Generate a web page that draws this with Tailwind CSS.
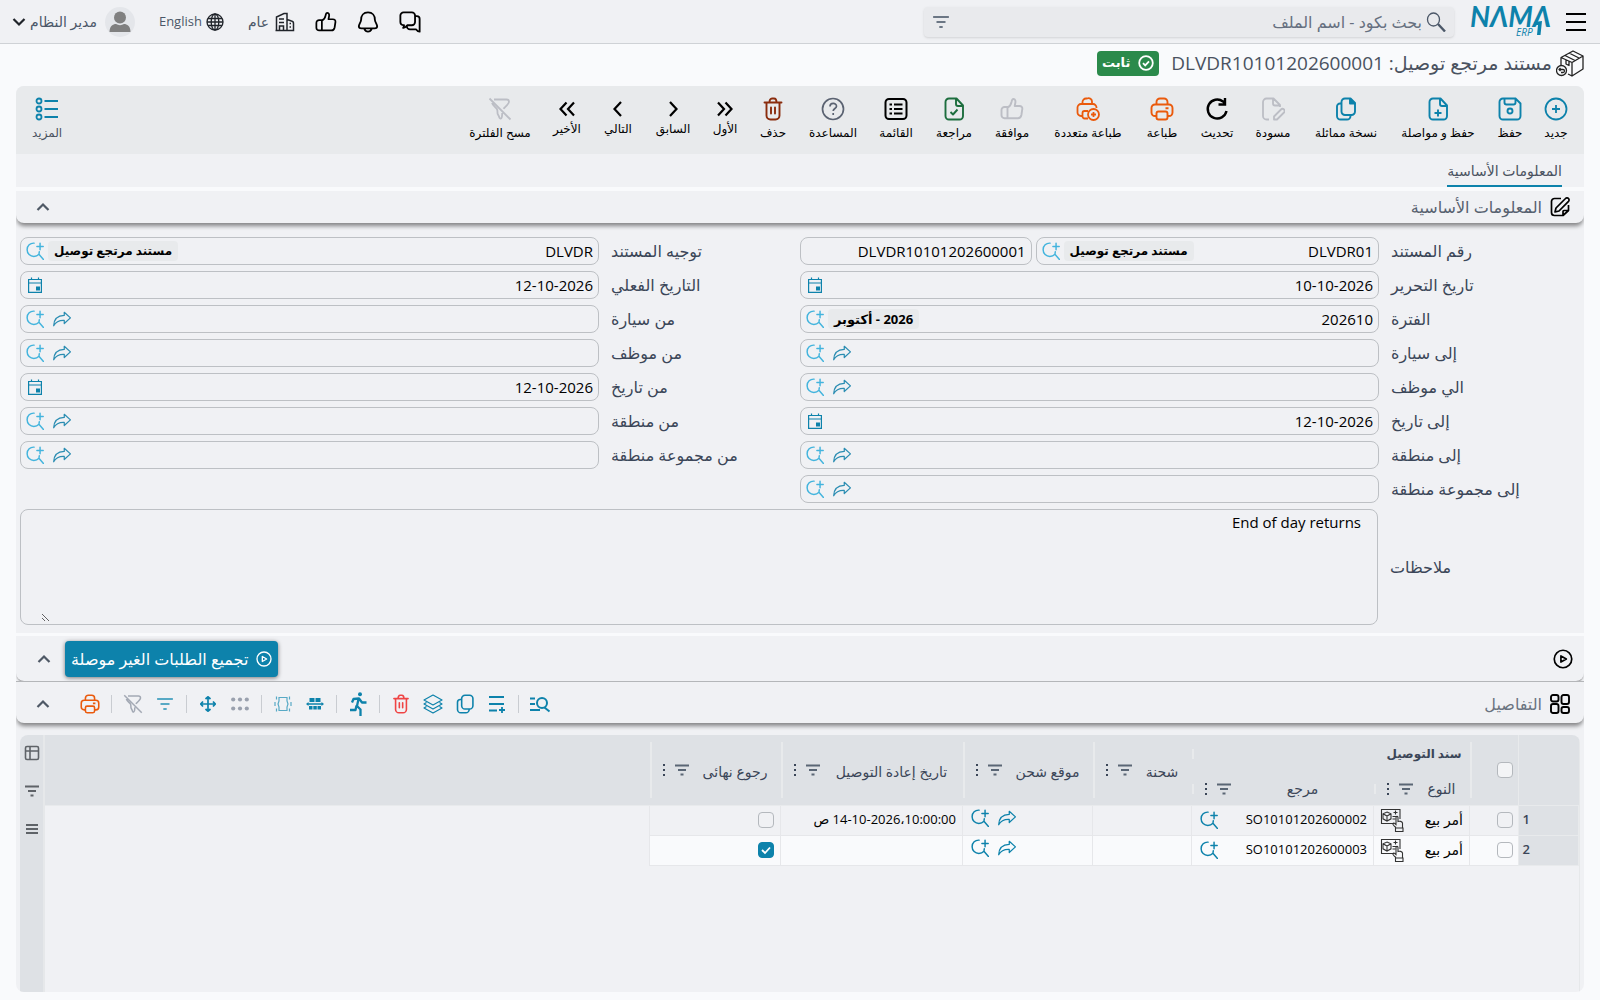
<!DOCTYPE html>
<html lang="ar" dir="rtl">
  <head>
    <meta charset="UTF-8" />
    <meta name="viewport" content="width=device-width, initial-scale=1.0" />
    <title>مستند مرتجع توصيل - NAMA ERP</title>
    <script src="https://cdn.jsdelivr.net/npm/@tailwindcss/browser@4"></script>
  </head>

  <body
    class="min-h-screen flex flex-col bg-[#f9fafc] text-black font-['Open_Sans','DejaVu_Sans',sans-serif]"
  >
    <!-- Icons -->
    <svg class="hidden" aria-hidden="true">
      <symbol id="i-lookup" viewBox="0 0 16 16" fill="none" stroke="currentColor" stroke-width="1.3" stroke-linecap="round">
        <path d="M7.200 1C3.700 .8 1 3.300 1 6.800c0 3.500 2.700 6 6 6 1.800 0 3.300-.6 4.500-1.900M11.500 10.900l.3-2.200M11.500 10.900L15.500 15.500" />
        <path d="M12.500 1.200v5.600M9.700 4h5.600" />
      </symbol>
      <symbol id="i-goto" viewBox="0 0 16 16" fill="none" stroke="currentColor" stroke-width="1.100" stroke-linejoin="round">
        <path d="M10 2l5.500 5L10 12V9.200C5.500 9 2.500 10.500.6 14 .8 8.500 4 5 10 4.800z" />
      </symbol>
      <symbol id="i-calendar" viewBox="0 0 16 16" fill="none" stroke="currentColor" stroke-width="1.200">
        <path d="M1.600 2.500h12.800v12.900H1.600zM1.600 6h12.800M4.500 .5v2.500M11.500 .5v2.500" />
        <path fill="currentColor" stroke="none" d="M9 9.500h4v4H9z" />
      </symbol>
      <symbol id="i-filter" viewBox="0 0 16 16" fill="none" stroke="currentColor" stroke-width="1.800">
        <path d="M1 3.500h14M4 8h8M6.500 12.500h3" />
      </symbol>
      <symbol id="i-dots" viewBox="0 0 4 16" fill="currentColor">
        <path d="M1 2h2v2H1zM1 7h2v2H1zM1 12h2v2H1z" />
      </symbol>
      <symbol id="i-chevron" viewBox="0 0 14 10" fill="none" stroke="currentColor" stroke-width="2.200">
        <path d="M1.500 8L7 2.500 12.500 8" />
      </symbol>
      <symbol id="i-printer" viewBox="0 0 24 24" fill="none" stroke="currentColor" stroke-width="1.900" stroke-linejoin="round">
        <path d="M6.500 7.500V5a3.500 3.500 0 013.500-3.500h4A3.500 3.500 0 0117.500 5v2.500M6 19H5a3.500 3.500 0 01-3.500-3.500V11A3.500 3.500 0 015 7.500h14a3.500 3.500 0 013.500 3.500v4.500A3.500 3.500 0 0119 19h-1" />
        <path d="M8.500 14.500h7a2 2 0 012 2v4a2 2 0 01-2 2h-7a2 2 0 01-2-2v-4a2 2 0 012-2zM15.500 11.200h3" />
      </symbol>
      <symbol id="i-copy" viewBox="0 0 24 24" fill="none" stroke="currentColor" stroke-width="1.900" stroke-linejoin="round">
        <path d="M11 1.500h5.500L21 6v8.500a3.500 3.500 0 01-3.500 3.500H11a3.500 3.500 0 01-3.500-3.500V5A3.500 3.500 0 0111 1.500zM7.500 6.500H6A3 3 0 003 9.500V19a3.500 3.500 0 003.500 3.500h6.500a3.500 3.500 0 003.500-3.500v-1" />
        <path fill="currentColor" d="M16 2v4.500h4.500z" />
      </symbol>
      <symbol id="i-copy2" viewBox="0 0 24 24" fill="none" stroke="currentColor" stroke-width="1.900">
        <path d="M12 1.500h5.500a4 4 0 014 4v8.500a4 4 0 01-4 4H12a4 4 0 01-4-4V5.500a4 4 0 014-4zM8 6.500H6.500A3.500 3.500 0 003 10v8.500a4 4 0 004 4h6a4 4 0 004-4V18" />
      </symbol>
      <symbol id="i-trash" viewBox="0 0 24 24" fill="none" stroke="currentColor" stroke-width="1.900" stroke-linecap="round">
        <path d="M3.500 5.500h17M5.500 5.500v13a4 4 0 004 4h5a4 4 0 004-4v-13M8.500 5.500c0-2.500 1-4 2.500-4h2c1.500 0 2.500 1.500 2.500 4M10 10.500v6M14 10.500v6" />
      </symbol>
      <symbol id="i-thumb" viewBox="0 0 24 24" fill="none" stroke="currentColor" stroke-width="1.900" stroke-linejoin="round">
        <path d="M7.500 10.500C10 9.500 11 7.500 11.500 5c.3-1.800.8-3 2-3 1.800 0 2.200 2 1.800 4l-.6 3h4.800c2 0 3 1.300 2.800 3l-.9 6c-.4 2-1.500 3.200-3.500 3.200H7.500M4.500 10h3v11.200h-3a3 3 0 01-3-3V13a3 3 0 013-3z" />
      </symbol>
      <symbol id="i-filter-off" viewBox="0 0 24 24" fill="none" stroke="currentColor" stroke-width="1.800" stroke-linejoin="round">
        <path d="M1.500 1.500l21 21M6 2.500h12.500c1.500 0 2.500 1 2.500 2.300 0 2.200-4.500 5.500-5.500 7M4 6c.8 2.300 3.300 4 4.800 5.800.8 1 .7 2.200.7 4.200 0 1.500 1 2 1.500 3.500.4 1.500 1 2.500 2 2 1.300-.6 1-3 1.200-5.500" />
      </symbol>
      <symbol id="i-play" viewBox="0 0 24 24" fill="none" stroke="currentColor" stroke-width="2" stroke-linejoin="round">
        <circle cx="12" cy="12" r="10.500" />
        <path d="M9.500 8.300l6.500 3.700-6.500 3.700z" />
      </symbol>
      <symbol id="i-order" viewBox="0 0 24 24" fill="none" stroke="#333" stroke-width="1.100">
        <path d="M20 8V1.500H1.500v14H14M20 8v3" />
        <path d="M7 4l4 1.800v5L7 13l-4-2.200v-5zM3 5.800L7 8l4-2.200M7 8v5M13.500 4.500h4M15.500 2.500v4M12.500 8.500h5M12.500 11h3" />
        <path d="M16 19.500c-2-1.500-3.500-3.500-3-4.200.7-.8 2 .2 3 1.200V9.500c0-1.500 2-1.500 2 0v4c1.500-.5 4-.3 4.500 1.500v4.500M15.500 20h7.500v3.500h-7.500z" />
      </symbol>
    </svg>

    <!-- Top bar -->
    <header
      class="h-11 shrink-0 flex items-center justify-between px-3 bg-[#f0f1f4] border-b border-[#cfd2d6] text-[#4b5768]"
    >
      <div class="flex items-center gap-4 pr-[2px]">
        <button type="button" aria-label="القائمة الرئيسية" class="text-black">
          <svg class="w-5 h-5" viewBox="0 0 20 20" stroke="currentColor" stroke-width="2">
            <path d="M0 2h20M0 10h20M0 18h20" />
          </svg>
        </button>
        <a href="#" aria-label="NAMA ERP">
          <svg class="w-20 h-10 overflow-visible" viewBox="0 0 80 40" direction="ltr" fill="#0d82ab">
            <text x="0" y="25" class="font-['Lato'] font-bold italic text-[28px]">NΛMΛ</text>
            <text x="46" y="34" class="font-['Open_Sans'] italic text-[10px]">ERP</text>
            <path d="M64 20l8-1-1.500 14h-3.500l1-10h-4z" />
          </svg>
        </a>
        <div class="flex items-center w-[530px] h-[30px] gap-1 pr-2 pl-1 rounded bg-[#e9eaed] shadow-sm">
          <svg class="w-5 h-5" viewBox="0 0 20 20" fill="none" stroke="currentColor">
            <ellipse cx="7.500" cy="7.500" rx="6" ry="6.500" stroke-width="1.300" />
            <path d="M12 12l7 7.500" stroke-width="2.400" />
          </svg>
          <input
            type="text"
            aria-label="بحث"
            placeholder="بحث بكود - اسم الملف"
            class="flex-1 bg-transparent text-base outline-none placeholder:text-[#667080]"
          />
          <button type="button" aria-label="تصفية" class="pl-1 text-[#6b7684]">
            <svg class="w-[18px] h-[18px]"><use href="#i-filter" /></svg>
          </button>
        </div>
      </div>

      <div class="flex items-center text-sm">
        <button type="button" aria-label="المحادثات" class="ml-5 text-black">
          <svg class="w-[22px] h-6" viewBox="0 0 24 24" fill="none" stroke="currentColor" stroke-width="2" stroke-linejoin="round">
            <path d="M5 1.500h9a3.500 3.500 0 013.500 3.500v7a3.500 3.500 0 01-3.500 3.500H9c-1.500 2-3 3-4.500 2.800 .8-.8 1-1.800 1-2.800-2.500 0-4-1-4-3.500V5A3.500 3.500 0 015 1.500z" />
            <path d="M17.500 5.500h2A3 3 0 0122.500 8.500v14c-1.500 0-3-1-4-2.500H12a3.500 3.500 0 01-3.500-3.500v-1" />
          </svg>
        </button>
        <button type="button" aria-label="الإشعارات" class="ml-5 text-black">
          <svg class="w-[22px] h-6" viewBox="0 0 24 24" fill="none" stroke="currentColor" stroke-width="2" stroke-linejoin="round">
            <path d="M12 1.500c-5 0-7.500 3.500-7.500 8-.2 3-2.500 5-2.500 7.200 0 1.500 1 2.300 2.800 2.300h14.400c1.800 0 2.800-.8 2.800-2.300 0-2.200-2.300-4.200-2.500-7.200 0-4.500-2.500-8-7.500-8zM8 19.500c.8 1.800 2 3 4 3s3.200-1.200 4-3" />
          </svg>
        </button>
        <button type="button" aria-label="الموافقات" class="ml-5 text-black">
          <svg class="w-[22px] h-[22px]"><use href="#i-thumb" /></svg>
        </button>
        <button type="button" class="flex items-center gap-[6px] ml-6">
          <svg class="w-5 h-5 text-[#20242a]" viewBox="0 0 20 20" fill="none" stroke="currentColor" stroke-width="1.500">
            <path d="M1.500 18.500V5L9 1.500h3v17M12 7.500l4.500 1.500a2.500 2.500 0 012 2.500v7H.5M4 7h5M4 10.500h5M4.500 18.500v-4.500h4v4.500M14.500 11.500h1.500M14.500 15h1.500" />
          </svg>
          عام
        </button>
        <button type="button" class="flex items-center gap-1 ml-6">
          <svg class="w-[18px] h-[18px] text-[#20242a]" viewBox="0 0 18 18" fill="none" stroke="currentColor" stroke-width="1.300">
            <circle cx="9" cy="9" r="8" />
            <ellipse cx="9" cy="9" rx="3.800" ry="8" />
            <path d="M2 5.500h14M2 12.500h14M1 9h16M9 1v16" />
          </svg>
          <span class="text-[13px]">English</span>
        </button>
        <button type="button" class="flex items-center">
          <svg class="w-[30px] h-[30px] ml-2" viewBox="0 0 30 30">
            <circle cx="15" cy="15" r="15" fill="#e4e6ea" />
            <circle cx="15" cy="10.500" r="6" fill="#808080" />
            <path fill="#808080" d="M4.500 25c0-6 3.500-8 6.500-8 2.500 1.500 5.500 1.500 8 0 3 0 6.500 2 6.500 8z" />
          </svg>
          مدير النظام
          <svg class="w-[14px] h-[10px] mr-1 rotate-180 text-[#20242a]"><use href="#i-chevron" /></svg>
        </button>
      </div>
    </header>

    <main class="flex-1 flex flex-col px-4 pb-2">
      <!-- Title -->
      <div class="flex items-center h-[42px] gap-1 pb-1">
        <svg class="w-7 h-7" viewBox="0 0 28 28" fill="none" stroke="#222" stroke-width="1.300" stroke-linejoin="round">
          <path d="M5 8.500L17 2l10 5-11 6.500zM16 13.500V27l11-7V7M5 8.500V16M12 25l4 2M9 6.500l10 5M13 4l10 5M10 11v4l3 1.500v-4" />
          <circle cx="5.500" cy="21.500" r="5" />
          <path d="M3 20.500h4c2 0 2 3 0 3H5M4.500 19L3 20.500 4.500 22" />
        </svg>
        <h1 class="text-[19px] text-[#4a5260]">مستند مرتجع توصيل: DLVDR10101202600001</h1>
        <span class="flex items-center gap-2 h-[25px] px-[5px] mr-2 rounded bg-[#2b8a4b] text-white text-[13px] font-bold">
          <svg class="w-4 h-4" viewBox="0 0 16 16" fill="none" stroke="currentColor" stroke-width="1.800">
            <circle cx="8" cy="8" r="6.800" />
            <path d="M5 8.200l2.200 2.200L11 6.300" />
          </svg>
          ثابت
        </span>
      </div>

      <div class="flex-1 flex flex-col rounded-lg overflow-hidden bg-[#f0f1f4]">
        <!-- Action toolbar -->
        <div class="flex items-start justify-between h-[68px] pt-[11px] pr-2 pl-4 bg-[#e8eaec] text-xs">
          <div class="flex items-start whitespace-nowrap">
            <button type="button" class="flex flex-col items-center gap-1 w-10">
              <svg class="w-6 h-6 text-[#0d82ab]" viewBox="0 0 24 24" fill="none" stroke="currentColor" stroke-width="1.800">
                <circle cx="12" cy="12" r="10.500" />
                <path d="M12 8v8M8 12h8" />
              </svg>
              جديد
            </button>
            <button type="button" class="flex flex-col items-center gap-1 w-[52px]">
              <svg class="w-6 h-6 text-[#0d82ab]" viewBox="0 0 24 24" fill="none" stroke="currentColor" stroke-width="1.900">
                <path d="M6 1.500h11.500l5 5V19a3.500 3.500 0 01-3.500 3.500H5A3.500 3.500 0 011.500 19V5A3.500 3.500 0 015 1.500zM6.500 2v3.500a2 2 0 002 2h7a2 2 0 002-2V2" />
                <circle cx="12" cy="14" r="2.500" />
              </svg>
              حفظ
            </button>
            <button type="button" class="flex flex-col items-center gap-1 w-[92px]">
              <svg class="w-6 h-6 text-[#0d82ab]" viewBox="0 0 24 24" fill="none" stroke="currentColor" stroke-width="1.900" stroke-linejoin="round">
                <path d="M7 1.500h7.500l6.500 7V19a3.500 3.500 0 01-3.500 3.500H7A3.500 3.500 0 013.500 19V5A3.500 3.500 0 017 1.500zM14 2v5a2 2 0 002 2h5M12 12.500v7M8.500 16h7" />
              </svg>
              حفظ و مواصلة
            </button>
            <button type="button" class="flex flex-col items-center gap-1 w-[92px]">
              <svg class="w-6 h-6 text-[#0d82ab]"><use href="#i-copy" /></svg>
              نسخة مماثلة
            </button>
            <button type="button" class="flex flex-col items-center gap-1 w-[54px]">
              <svg class="w-6 h-6 text-[#bcbec5]" viewBox="0 0 24 24" fill="none" stroke="currentColor" stroke-width="1.800" stroke-linejoin="round">
                <path d="M19 10V8L12.500 1.500H5.500A3.500 3.500 0 002 5v14a3.500 3.500 0 003.500 3.500H8M12 2v4.500a2 2 0 002 2h5M13 22.500v-3l7-7a2 2 0 013 3l-7 7z" />
              </svg>
              مسودة
            </button>
            <button type="button" class="flex flex-col items-center gap-1 w-[58px]">
              <svg class="w-6 h-6" viewBox="0 0 24 24" fill="none" stroke="currentColor" stroke-width="2.400">
                <path d="M21.500 14a9.500 9.500 0 11-3.500-9.500l1.500 1.500M20 1v6.500h-6.500" />
              </svg>
              تحديث
            </button>
            <button type="button" class="flex flex-col items-center gap-1 w-[52px]">
              <svg class="w-6 h-6 text-[#ea5a0c]"><use href="#i-printer" /></svg>
              طباعة
            </button>
            <button type="button" class="flex flex-col items-center gap-1 w-24">
              <svg class="w-6 h-6 text-[#ea5a0c]" viewBox="0 0 24 24" fill="none" stroke="currentColor" stroke-width="1.800" stroke-linejoin="round">
                <path d="M6.500 7V5A3.500 3.500 0 0110 1.500h1A3.500 3.500 0 0116 5v2M6 19H5a3.500 3.500 0 01-3.500-3.500V10.500A3.500 3.500 0 015 7h12a3.500 3.500 0 013.500 3.500V11M12 21.500H8.500a2 2 0 01-2-2V16a2 2 0 012-2H12" />
                <circle cx="17.500" cy="17.500" r="5.500" />
                <path d="M17.500 15v5M15 17.500h5" />
              </svg>
              طباعة متعددة
            </button>
            <button type="button" class="flex flex-col items-center gap-1 w-14">
              <svg class="w-6 h-6 text-[#bcbec5]"><use href="#i-thumb" /></svg>
              موافقة
            </button>
            <button type="button" class="flex flex-col items-center gap-1 w-[60px]">
              <svg class="w-6 h-6 text-[#1d6e3e]" viewBox="0 0 24 24" fill="none" stroke="currentColor" stroke-width="1.900" stroke-linejoin="round">
                <path d="M7 1.500h7.500l6.500 7V19a3.500 3.500 0 01-3.500 3.500H7A3.500 3.500 0 013.500 19V5A3.500 3.500 0 017 1.500zM14 2v5a2 2 0 002 2h5M8.500 15l2.500 2.500 4.500-5" />
              </svg>
              مراجعة
            </button>
            <button type="button" class="flex flex-col items-center gap-1 w-14">
              <svg class="w-6 h-6" viewBox="0 0 24 24" fill="none" stroke="currentColor" stroke-width="2">
                <rect x="1.500" y="2" width="21" height="20" rx="3.500" />
                <path d="M5.500 7.500h2.500M5.500 12h2.500M5.500 16.500h2.500M10 7.500h8.500M10 12h8.500M10 16.500h8.500" />
              </svg>
              القائمة
            </button>
            <button type="button" class="flex flex-col items-center gap-1 w-[70px]">
              <svg class="w-6 h-6 text-[#5b6372]" viewBox="0 0 24 24" fill="none" stroke="currentColor" stroke-width="1.700">
                <circle cx="12" cy="12" r="10.500" />
                <path d="M9 9.500c0-4 6.500-4 6.500-.3 0 2.300-3.300 2.300-3.300 4.800M12.200 16v2" />
              </svg>
              المساعدة
            </button>
            <button type="button" class="flex flex-col items-center gap-1 w-[50px]">
              <svg class="w-6 h-6 text-[#8a2c0d]"><use href="#i-trash" /></svg>
              حذف
            </button>
            <button type="button" class="flex flex-col items-center w-[46px]">
              <svg class="w-5 h-6" viewBox="0 0 20 24" fill="none" stroke="currentColor" stroke-width="2.200">
                <path d="M3 5.500l6 6.500-6 6.500M10.500 5.500l6 6.500-6 6.500" />
              </svg>
              الأول
            </button>
            <button type="button" class="flex flex-col items-center w-[58px]">
              <svg class="w-5 h-6" viewBox="0 0 20 24" fill="none" stroke="currentColor" stroke-width="2.200">
                <path d="M7 5l6.500 7L7 19" />
              </svg>
              السابق
            </button>
            <button type="button" class="flex flex-col items-center w-[52px]">
              <svg class="w-5 h-6" viewBox="0 0 20 24" fill="none" stroke="currentColor" stroke-width="2.200">
                <path d="M13 5l-6.500 7L13 19" />
              </svg>
              التالي
            </button>
            <button type="button" class="flex flex-col items-center w-[50px]">
              <svg class="w-5 h-6" viewBox="0 0 20 24" fill="none" stroke="currentColor" stroke-width="2.200">
                <path d="M9.500 5.500l-6 6.500 6 6.500M17 5.500l-6 6.500 6 6.500" />
              </svg>
              الأخير
            </button>
            <button type="button" class="flex flex-col items-center gap-1 w-[84px]">
              <svg class="w-6 h-6 text-[#bcbec5]"><use href="#i-filter-off" /></svg>
              مسح الفلترة
            </button>
          </div>
          <button type="button" class="flex flex-col items-center gap-1 text-[#4a5260]">
            <svg class="w-6 h-6 text-[#0d82ab]" viewBox="0 0 24 24" fill="none" stroke="currentColor" stroke-width="1.800">
              <circle cx="4" cy="4" r="2.500" />
              <circle cx="4" cy="12" r="2.500" />
              <circle cx="4" cy="20" r="2.500" />
              <path d="M9.500 4H23M9.500 12H23M9.500 20H23" />
            </svg>
            المزيد
          </button>
        </div>

        <!-- Tabs -->
        <nav class="flex h-[33px] px-[22px]">
          <a href="#basic" class="flex items-center pt-[2px] border-b-2 border-[#0d82ab] text-sm text-[#4a5260]">المعلومات الأساسية</a>
        </nav>

        <!-- Basic information -->
        <div
          class="relative flex items-center justify-between h-9 pr-[14px] pl-5 border-t-4 border-[#f9fafc] rounded-b-lg bg-[#f0f1f4] shadow-[0_4px_4px_-1px_rgba(0,0,0,0.45)]"
        >
          <h2 class="flex items-center gap-2 text-base text-[#56606f]">
            <svg class="w-5 h-5 text-black" viewBox="0 0 20 20" fill="none" stroke="currentColor" stroke-width="1.700" stroke-linejoin="round">
              <path d="M11 1.500H4.500a3 3 0 00-3 3v11a3 3 0 003 3H13l5.500-5V8M5 15l1-4 9.500-9.500a1.900 1.900 0 013 2.800L9 14zM13 18v-3.500a1 1 0 011-1h4.500" />
            </svg>
            المعلومات الأساسية
          </h2>
          <button type="button" aria-label="طي" class="text-[#4f5966]">
            <svg class="w-[14px] h-[10px]"><use href="#i-chevron" /></svg>
          </button>
        </div>

        <form id="basic" class="px-1 pt-[14px] pb-2 text-[15px]">
          <div class="grid grid-cols-2">
            <div class="flex flex-col gap-[6px]">
              <div class="flex items-center gap-3">
                <label for="docBook" class="w-[189px] text-left text-base text-[#3b4658]">رقم المستند</label>
                <div class="flex flex-1 gap-1">
                  <div class="flex flex-1 items-center h-7 px-[5px] border border-[#bdc0c4] rounded-lg">
                    <input id="docBook" value="DLVDR01" class="flex-1 min-w-0 outline-none" />
                    <span class="h-5 px-[6px] ml-[4px] rounded bg-[#e8eaec] text-xs leading-5 font-bold">مستند مرتجع توصيل</span>
                    <button type="button" aria-label="بحث" class="text-[#43b4dd]"><svg class="w-[18px] h-[18px]"><use href="#i-lookup" /></svg></button>
                  </div>
                  <input aria-label="كود المستند" value="DLVDR10101202600001" class="w-2/5 h-7 px-[5px] border border-[#bdc0c4] rounded-lg outline-none" />
                </div>
              </div>
              <div class="flex items-center gap-3">
                <label for="issueDate" class="w-[189px] text-left text-base text-[#3b4658]">تاريخ التحرير</label>
                <div class="flex flex-1 items-center h-7 px-[5px] border border-[#bdc0c4] rounded-lg">
                  <input id="issueDate" value="10-10-2026" class="flex-1 min-w-0 outline-none" />
                  <button type="button" aria-label="التقويم" class="text-[#0d82ab]"><svg class="w-[18px] h-[18px] p-px"><use href="#i-calendar" /></svg></button>
                </div>
              </div>
              <div class="flex items-center gap-3">
                <label for="period" class="w-[189px] text-left text-base text-[#3b4658]">الفترة</label>
                <div class="flex flex-1 items-center h-7 px-[5px] border border-[#bdc0c4] rounded-lg">
                  <input id="period" value="202610" class="flex-1 min-w-0 outline-none" />
                  <span class="h-5 px-[6px] ml-[4px] rounded bg-[#e8eaec] text-[13px] leading-5 font-bold">2026 - أكتوبر</span>
                  <button type="button" aria-label="بحث" class="text-[#43b4dd]"><svg class="w-[18px] h-[18px]"><use href="#i-lookup" /></svg></button>
                </div>
              </div>
              <div class="flex items-center gap-3">
                <label for="toCar" class="w-[189px] text-left text-base text-[#3b4658]">إلى سيارة</label>
                <div class="flex flex-1 items-center gap-[9px] h-7 px-[5px] border border-[#bdc0c4] rounded-lg">
                  <input id="toCar" class="flex-1 min-w-0 outline-none" />
                  <button type="button" aria-label="انتقال" class="text-[#2b8db2]"><svg class="w-[18px] h-[18px]"><use href="#i-goto" /></svg></button>
                  <button type="button" aria-label="بحث" class="text-[#43b4dd]"><svg class="w-[18px] h-[18px]"><use href="#i-lookup" /></svg></button>
                </div>
              </div>
              <div class="flex items-center gap-3">
                <label for="toEmployee" class="w-[189px] text-left text-base text-[#3b4658]">الي موظف</label>
                <div class="flex flex-1 items-center gap-[9px] h-7 px-[5px] border border-[#bdc0c4] rounded-lg">
                  <input id="toEmployee" class="flex-1 min-w-0 outline-none" />
                  <button type="button" aria-label="انتقال" class="text-[#2b8db2]"><svg class="w-[18px] h-[18px]"><use href="#i-goto" /></svg></button>
                  <button type="button" aria-label="بحث" class="text-[#43b4dd]"><svg class="w-[18px] h-[18px]"><use href="#i-lookup" /></svg></button>
                </div>
              </div>
              <div class="flex items-center gap-3">
                <label for="toDate" class="w-[189px] text-left text-base text-[#3b4658]">إلى تاريخ</label>
                <div class="flex flex-1 items-center h-7 px-[5px] border border-[#bdc0c4] rounded-lg">
                  <input id="toDate" value="12-10-2026" class="flex-1 min-w-0 outline-none" />
                  <button type="button" aria-label="التقويم" class="text-[#0d82ab]"><svg class="w-[18px] h-[18px] p-px"><use href="#i-calendar" /></svg></button>
                </div>
              </div>
              <div class="flex items-center gap-3">
                <label for="toRegion" class="w-[189px] text-left text-base text-[#3b4658]">إلى منطقة</label>
                <div class="flex flex-1 items-center gap-[9px] h-7 px-[5px] border border-[#bdc0c4] rounded-lg">
                  <input id="toRegion" class="flex-1 min-w-0 outline-none" />
                  <button type="button" aria-label="انتقال" class="text-[#2b8db2]"><svg class="w-[18px] h-[18px]"><use href="#i-goto" /></svg></button>
                  <button type="button" aria-label="بحث" class="text-[#43b4dd]"><svg class="w-[18px] h-[18px]"><use href="#i-lookup" /></svg></button>
                </div>
              </div>
              <div class="flex items-center gap-3">
                <label for="toRegionGroup" class="w-[189px] text-left text-base text-[#3b4658]">إلى مجموعة منطقة</label>
                <div class="flex flex-1 items-center gap-[9px] h-7 px-[5px] border border-[#bdc0c4] rounded-lg">
                  <input id="toRegionGroup" class="flex-1 min-w-0 outline-none" />
                  <button type="button" aria-label="انتقال" class="text-[#2b8db2]"><svg class="w-[18px] h-[18px]"><use href="#i-goto" /></svg></button>
                  <button type="button" aria-label="بحث" class="text-[#43b4dd]"><svg class="w-[18px] h-[18px]"><use href="#i-lookup" /></svg></button>
                </div>
              </div>
            </div>

            <div class="flex flex-col gap-[6px]">
              <div class="flex items-center gap-3">
                <label for="docTerm" class="w-[189px] text-left text-base text-[#3b4658]">توجيه المستند</label>
                <div class="flex flex-1 items-center h-7 px-[5px] border border-[#bdc0c4] rounded-lg">
                  <input id="docTerm" value="DLVDR" class="flex-1 min-w-0 outline-none" />
                  <span class="h-5 px-[6px] ml-[4px] rounded bg-[#e8eaec] text-xs leading-5 font-bold">مستند مرتجع توصيل</span>
                  <button type="button" aria-label="بحث" class="text-[#43b4dd]"><svg class="w-[18px] h-[18px]"><use href="#i-lookup" /></svg></button>
                </div>
              </div>
              <div class="flex items-center gap-3">
                <label for="actualDate" class="w-[189px] text-left text-base text-[#3b4658]">التاريخ الفعلي</label>
                <div class="flex flex-1 items-center h-7 px-[5px] border border-[#bdc0c4] rounded-lg">
                  <input id="actualDate" value="12-10-2026" class="flex-1 min-w-0 outline-none" />
                  <button type="button" aria-label="التقويم" class="text-[#0d82ab]"><svg class="w-[18px] h-[18px] p-px"><use href="#i-calendar" /></svg></button>
                </div>
              </div>
              <div class="flex items-center gap-3">
                <label for="fromCar" class="w-[189px] text-left text-base text-[#3b4658]">من سيارة</label>
                <div class="flex flex-1 items-center gap-[9px] h-7 px-[5px] border border-[#bdc0c4] rounded-lg">
                  <input id="fromCar" class="flex-1 min-w-0 outline-none" />
                  <button type="button" aria-label="انتقال" class="text-[#2b8db2]"><svg class="w-[18px] h-[18px]"><use href="#i-goto" /></svg></button>
                  <button type="button" aria-label="بحث" class="text-[#43b4dd]"><svg class="w-[18px] h-[18px]"><use href="#i-lookup" /></svg></button>
                </div>
              </div>
              <div class="flex items-center gap-3">
                <label for="fromEmployee" class="w-[189px] text-left text-base text-[#3b4658]">من موظف</label>
                <div class="flex flex-1 items-center gap-[9px] h-7 px-[5px] border border-[#bdc0c4] rounded-lg">
                  <input id="fromEmployee" class="flex-1 min-w-0 outline-none" />
                  <button type="button" aria-label="انتقال" class="text-[#2b8db2]"><svg class="w-[18px] h-[18px]"><use href="#i-goto" /></svg></button>
                  <button type="button" aria-label="بحث" class="text-[#43b4dd]"><svg class="w-[18px] h-[18px]"><use href="#i-lookup" /></svg></button>
                </div>
              </div>
              <div class="flex items-center gap-3">
                <label for="fromDate" class="w-[189px] text-left text-base text-[#3b4658]">من تاريخ</label>
                <div class="flex flex-1 items-center h-7 px-[5px] border border-[#bdc0c4] rounded-lg">
                  <input id="fromDate" value="12-10-2026" class="flex-1 min-w-0 outline-none" />
                  <button type="button" aria-label="التقويم" class="text-[#0d82ab]"><svg class="w-[18px] h-[18px] p-px"><use href="#i-calendar" /></svg></button>
                </div>
              </div>
              <div class="flex items-center gap-3">
                <label for="fromRegion" class="w-[189px] text-left text-base text-[#3b4658]">من منطقة</label>
                <div class="flex flex-1 items-center gap-[9px] h-7 px-[5px] border border-[#bdc0c4] rounded-lg">
                  <input id="fromRegion" class="flex-1 min-w-0 outline-none" />
                  <button type="button" aria-label="انتقال" class="text-[#2b8db2]"><svg class="w-[18px] h-[18px]"><use href="#i-goto" /></svg></button>
                  <button type="button" aria-label="بحث" class="text-[#43b4dd]"><svg class="w-[18px] h-[18px]"><use href="#i-lookup" /></svg></button>
                </div>
              </div>
              <div class="flex items-center gap-3">
                <label for="fromRegionGroup" class="w-[189px] text-left text-base text-[#3b4658]">من مجموعة منطقة</label>
                <div class="flex flex-1 items-center gap-[9px] h-7 px-[5px] border border-[#bdc0c4] rounded-lg">
                  <input id="fromRegionGroup" class="flex-1 min-w-0 outline-none" />
                  <button type="button" aria-label="انتقال" class="text-[#2b8db2]"><svg class="w-[18px] h-[18px]"><use href="#i-goto" /></svg></button>
                  <button type="button" aria-label="بحث" class="text-[#43b4dd]"><svg class="w-[18px] h-[18px]"><use href="#i-lookup" /></svg></button>
                </div>
              </div>
            </div>
          </div>

          <div class="flex items-center gap-3 mt-[6px]">
            <label for="remarks" class="w-[190px] text-left text-base text-[#3b4658]">ملاحظات</label>
            <div class="flex flex-1 h-[116px] pr-4 pl-5 border border-[#bdc0c4] rounded-lg">
              <textarea id="remarks" class="flex-1 h-28 pt-px outline-none">End of day returns</textarea>
            </div>
          </div>
        </form>

        <!-- Collect orders -->
        <div
          class="flex items-center justify-between h-12 pr-[11px] pl-[21px] border-t-3 border-[#f9fafc] rounded-b-lg shadow-[0_2px_2px_-1px_rgba(0,0,0,0.5)]"
        >
          <svg class="w-5 h-5"><use href="#i-play" /></svg>
          <div class="flex items-center gap-[14px]">
            <button
              type="button"
              class="flex items-center gap-2 h-9 px-[6px] rounded bg-[#0d82ab] text-white text-base shadow-[0_1px_4px_rgba(0,0,0,0.5)]"
            >
              <svg class="w-4 h-4"><use href="#i-play" /></svg>
              تجميع الطلبات الغير موصلة
            </button>
            <button type="button" aria-label="طي" class="text-[#4f5966]">
              <svg class="w-[14px] h-[10px]"><use href="#i-chevron" /></svg>
            </button>
          </div>
        </div>

        <!-- Details -->
        <div
          class="relative flex items-center justify-between h-[42px] pt-[2px] pr-[14px] pl-5 rounded-b-lg bg-[#f0f1f4] border-t border-[#b4b6b9] shadow-[0_4px_4px_-1px_rgba(0,0,0,0.45)]"
        >
          <h2 class="flex items-center gap-2 text-base text-[#6a7380]">
            <svg class="w-5 h-5 text-black" viewBox="0 0 20 20" fill="none" stroke="currentColor" stroke-width="1.900">
              <rect x="1" y="1" width="7.500" height="6.500" rx="2" />
              <rect x="11.500" y="1" width="7.500" height="9" rx="2" />
              <rect x="1" y="10" width="7.500" height="9" rx="2" />
              <rect x="11.500" y="13" width="7.500" height="6" rx="2" />
            </svg>
            التفاصيل
          </h2>
          <div class="flex items-center text-[#0d82ab]">
            <button type="button" aria-label="بحث في الجدول" class="flex justify-center w-8">
              <svg class="w-[22px] h-[18px]" viewBox="0 0 22 18" fill="none" stroke="currentColor" stroke-width="2">
                <path d="M1 3.500h5M1 9h5M1 15h10M15.500 12.500l5 4" />
                <circle cx="13" cy="8" r="5" />
              </svg>
            </button>
            <span class="w-px h-[18px] mx-[5px] bg-[#c9ccd1]"></span>
            <button type="button" aria-label="إضافة سطر" class="flex justify-center w-8">
              <svg class="w-[18px] h-[18px]" viewBox="0 0 18 18" fill="none" stroke="currentColor" stroke-width="1.800">
                <path d="M1 2h15M1 9h15M1 15.500h8M11 15h6M14 12v6" />
              </svg>
            </button>
            <button type="button" aria-label="نسخ" class="flex justify-center w-8">
              <svg class="w-[20px] h-[20px]"><use href="#i-copy2" /></svg>
            </button>
            <button type="button" aria-label="طبقات" class="flex justify-center w-8">
              <svg class="w-[20px] h-[20px]" viewBox="0 0 20 20" fill="none" stroke="currentColor" stroke-width="1.200" stroke-linejoin="round">
                <path d="M10 1l9 5-9 5-9-5zM3.500 8.500L1 10l9 5 9-5-2.500-1.500M3.500 12.500L1 14l9 5 9-5-2.500-1.500" />
              </svg>
            </button>
            <button type="button" aria-label="حذف سطر" class="flex justify-center w-8 text-[#ef4444]">
              <svg class="w-[20px] h-[20px]"><use href="#i-trash" /></svg>
            </button>
            <span class="w-px h-[18px] mx-[5px] bg-[#c9ccd1]"></span>
            <button type="button" aria-label="تنفيذ" class="flex justify-center w-8">
              <svg class="w-[18px] h-6" viewBox="0 0 18 24" fill="none" stroke="currentColor" stroke-width="2.300" stroke-linejoin="round">
                <circle cx="11" cy="2.300" r="2" fill="currentColor" stroke="none" />
                <path d="M3 10.500L4.500 7 10 6.500l3 4h4.500M9.500 7L8 14l3.500 3.500V24M7.500 13.500L6.500 18H1" />
              </svg>
            </button>
            <span class="w-px h-[18px] mx-[5px] bg-[#c9ccd1]"></span>
            <button type="button" aria-label="تقسيم السطر" class="flex justify-center w-8">
              <svg class="w-[18px] h-[18px]" viewBox="0 0 18 18" fill="currentColor">
                <path d="M3.500 3h5v4h-5zM9.500 3h5v4h-5zM3 11h3.500v3.500H3zM7.300 11h3.500v3.500H7.300zM11.500 11H15v3.500h-3.500zM0 9l2.500-2v1.200h13V7L18 9l-2.500 2V9.800h-13V11z" />
              </svg>
            </button>
            <button type="button" aria-label="ملاءمة الأعمدة" class="flex justify-center w-8 text-[#57a9c5]">
              <svg class="w-[18px] h-[18px]" viewBox="0 0 18 18" fill="none" stroke="currentColor" stroke-width="1.200">
                <path d="M5 2.500h8v3.500l1 3-1 3v3.500H5V12L4 9l1-3zM2.500 1.500v3M15.500 1.500v3M2.500 13.500v3M15.500 13.500v3M1 7v4M17 7v4" />
              </svg>
            </button>
            <span class="w-px h-[18px] mx-[5px] bg-[#c9ccd1]"></span>
            <button type="button" aria-label="شبكة" class="flex justify-center w-8 text-[#9aa1ae]">
              <svg class="w-[18px] h-[18px]" viewBox="0 0 18 18" fill="currentColor">
                <circle cx="2.200" cy="4.500" r="2.100" />
                <circle cx="9" cy="4.500" r="2.100" />
                <circle cx="15.800" cy="4.500" r="2.100" />
                <circle cx="2.200" cy="13.500" r="2.100" />
                <circle cx="9" cy="13.500" r="2.100" />
                <circle cx="15.800" cy="13.500" r="2.100" />
              </svg>
            </button>
            <button type="button" aria-label="توسيع" class="flex justify-center w-8">
              <svg class="w-4 h-4" viewBox="0 0 16 16" fill="none" stroke="currentColor" stroke-width="1.700">
                <path d="M8 1v14M1 8h14M5.500 3L8 .8 10.500 3M5.500 13L8 15.200 10.500 13M3 5.500L.8 8 3 10.500M13 5.500L15.200 8 13 10.500" />
              </svg>
            </button>
            <span class="w-px h-[18px] mx-[5px] bg-[#c9ccd1]"></span>
            <button type="button" aria-label="تصفية" class="flex justify-center w-8 text-[#57a9c5]">
              <svg class="w-[18px] h-[18px]"><use href="#i-filter" /></svg>
            </button>
            <button type="button" aria-label="مسح التصفية" class="flex justify-center w-8 text-[#a3a9b4]">
              <svg class="w-5 h-5"><use href="#i-filter-off" /></svg>
            </button>
            <span class="w-px h-[18px] mx-[5px] bg-[#c9ccd1]"></span>
            <button type="button" aria-label="طباعة" class="flex justify-center w-8 text-[#ea5a0c]">
              <svg class="w-5 h-5"><use href="#i-printer" /></svg>
            </button>
            <button type="button" aria-label="طي" class="mr-6 text-[#4f5966]">
              <svg class="w-[14px] h-[10px]"><use href="#i-chevron" /></svg>
            </button>
          </div>
        </div>

        <!-- Details grid -->
        <div class="flex-1 flex mt-3 mx-1 rounded-t-lg overflow-hidden">
          <div class="flex-1 border-x border-[#e6e8ea]">
            <table class="w-full table-fixed border-collapse text-[13px] text-[#3b4658]">
              <colgroup>
                <col class="w-[60px]" />
                <col class="w-[49px]" />
                <col class="w-24" />
                <col class="w-[182px]" />
                <col class="w-[99px]" />
                <col class="w-[130px]" />
                <col class="w-[182px]" />
                <col class="w-[131px]" />
                <col />
              </colgroup>
              <thead class="bg-[#dee1e5]">
                <tr class="h-[38px]">
                  <th rowspan="2" class="border-l border-b border-[#e8eaec]"></th>
                  <th rowspan="2" class="p-0 border-b border-[#e8eaec]">
                    <div class="flex items-center h-14 pr-[5px] border-l-2 border-[#e8eaec]">
                      <input type="checkbox" aria-label="تحديد الكل" class="appearance-none w-4 h-4 rounded border border-[#b4b8bd] bg-[#f3f4f6]" />
                    </div>
                  </th>
                  <th colspan="2" class="p-0 text-xs text-right">
                    <div class="flex items-center h-[10px] pr-2 border-l-2 border-[#e8eaec]">سند التوصيل</div>
                  </th>
                  <th rowspan="2" class="p-0 border-b border-[#e8eaec] font-normal text-sm">
                    <div class="flex items-center h-14 pl-[10px] border-l-2 border-[#e8eaec]">
                      <span class="flex-1 pt-1 text-center">شحنة</span>
                      <svg class="w-4 h-4 ml-2 text-[#5a6675]"><use href="#i-filter" /></svg>
                      <svg class="w-1 h-4"><use href="#i-dots" /></svg>
                    </div>
                  </th>
                  <th rowspan="2" class="p-0 border-b border-[#e8eaec] font-normal text-sm">
                    <div class="flex items-center h-14 pl-[10px] border-l-2 border-[#e8eaec]">
                      <span class="flex-1 pt-1 text-center">موقع شحن</span>
                      <svg class="w-4 h-4 ml-2 text-[#5a6675]"><use href="#i-filter" /></svg>
                      <svg class="w-1 h-4"><use href="#i-dots" /></svg>
                    </div>
                  </th>
                  <th rowspan="2" class="p-0 border-b border-[#e8eaec] font-normal text-sm">
                    <div class="flex items-center h-14 pl-[10px] border-l-2 border-[#e8eaec]">
                      <span class="flex-1 pt-1 text-center">تاريخ إعادة التوصيل</span>
                      <svg class="w-4 h-4 ml-2 text-[#5a6675]"><use href="#i-filter" /></svg>
                      <svg class="w-1 h-4"><use href="#i-dots" /></svg>
                    </div>
                  </th>
                  <th rowspan="2" class="p-0 border-b border-[#e8eaec] font-normal text-sm">
                    <div class="flex items-center h-14 pl-[10px] border-l-2 border-[#e8eaec]">
                      <span class="flex-1 pt-1 text-center">رجوع نهائى</span>
                      <svg class="w-4 h-4 ml-2 text-[#5a6675]"><use href="#i-filter" /></svg>
                      <svg class="w-1 h-4"><use href="#i-dots" /></svg>
                    </div>
                  </th>
                  <th rowspan="2" class="border-b border-[#e8eaec]"></th>
                </tr>
                <tr class="h-8">
                  <th class="p-0 border-b border-[#e8eaec] font-normal text-sm">
                    <div class="flex items-center h-[10px] pl-[10px] border-l-2 border-[#e8eaec]">
                      <span class="flex-1 text-center">النوع</span>
                      <svg class="w-4 h-4 ml-2 text-[#5a6675]"><use href="#i-filter" /></svg>
                      <svg class="w-1 h-4"><use href="#i-dots" /></svg>
                    </div>
                  </th>
                  <th class="p-0 border-b border-[#e8eaec] font-normal text-sm">
                    <div class="flex items-center h-[10px] pl-[10px] border-l-2 border-[#e8eaec]">
                      <span class="flex-1 text-center">مرجع</span>
                      <svg class="w-4 h-4 ml-2 text-[#5a6675]"><use href="#i-filter" /></svg>
                      <svg class="w-1 h-4"><use href="#i-dots" /></svg>
                    </div>
                  </th>
                </tr>
              </thead>
              <tbody class="text-black">
                <tr class="h-[30px]">
                  <th scope="row" class="pr-12 pl-0 text-right border border-[#e8eaec] bg-[#dee1e5] text-[#3b4658] font-semibold">1</th>
                  <td class="pr-[5px] border border-[#e6e7ea]">
                    <input type="checkbox" aria-label="تحديد السطر 1" class="block appearance-none w-4 h-4 rounded border border-[#b4b8bd]" />
                  </td>
                  <td class="px-[6px] border border-[#e6e7ea] text-sm">
                    <div class="flex items-center justify-between">
                      أمر بيع
                      <svg class="w-6 h-6"><use href="#i-order" /></svg>
                    </div>
                  </td>
                  <td class="pr-[6px] pl-2 border border-[#e6e7ea]">
                    <div class="flex items-center justify-between">
                      SO10101202600002
                      <button type="button" aria-label="بحث" class="text-[#0d82ab]"><svg class="w-[18px] h-[18px]"><use href="#i-lookup" /></svg></button>
                    </div>
                  </td>
                  <td class="border border-[#e6e7ea]"></td>
                  <td class="pl-2 border border-[#e6e7ea]">
                    <div class="flex items-center justify-end gap-[9px] pb-1 text-[#0d82ab]">
                      <button type="button" aria-label="انتقال"><svg class="w-[18px] h-[18px]"><use href="#i-goto" /></svg></button>
                      <button type="button" aria-label="بحث"><svg class="w-[18px] h-[18px]"><use href="#i-lookup" /></svg></button>
                    </div>
                  </td>
                  <td class="pr-[6px] border border-[#e6e7ea]">14-10-2026،10:00:00 ص</td>
                  <td class="pr-[6px] border border-[#e6e7ea]">
                    <input type="checkbox" aria-label="رجوع نهائى 1" class="block appearance-none w-4 h-4 rounded border border-[#b4b8bd]" />
                  </td>
                </tr>
                <tr class="h-[30px]">
                  <th scope="row" class="pr-12 pl-0 text-right border border-[#e8eaec] bg-[#dee1e5] text-[#3b4658] font-semibold">2</th>
                  <td class="pr-[5px] border border-[#e6e7ea] bg-[#f9fafc]">
                    <input type="checkbox" aria-label="تحديد السطر 2" class="block appearance-none w-4 h-4 rounded border border-[#b4b8bd]" />
                  </td>
                  <td class="px-[6px] border border-[#e6e7ea] bg-[#f9fafc] text-sm">
                    <div class="flex items-center justify-between">
                      أمر بيع
                      <svg class="w-6 h-6"><use href="#i-order" /></svg>
                    </div>
                  </td>
                  <td class="pr-[6px] pl-2 border border-[#e6e7ea] bg-[#f9fafc]">
                    <div class="flex items-center justify-between">
                      SO10101202600003
                      <button type="button" aria-label="بحث" class="text-[#0d82ab]"><svg class="w-[18px] h-[18px]"><use href="#i-lookup" /></svg></button>
                    </div>
                  </td>
                  <td class="border border-[#e6e7ea] bg-[#f9fafc]"></td>
                  <td class="pl-2 border border-[#e6e7ea] bg-[#f9fafc]">
                    <div class="flex items-center justify-end gap-[9px] pb-1 text-[#0d82ab]">
                      <button type="button" aria-label="انتقال"><svg class="w-[18px] h-[18px]"><use href="#i-goto" /></svg></button>
                      <button type="button" aria-label="بحث"><svg class="w-[18px] h-[18px]"><use href="#i-lookup" /></svg></button>
                    </div>
                  </td>
                  <td class="border border-[#e6e7ea] bg-[#f9fafc]"></td>
                  <td class="pr-[6px] border border-[#e6e7ea] bg-[#f9fafc]">
                    <div class="grid w-4 h-4 text-white">
                      <input type="checkbox" checked aria-label="رجوع نهائى 2" class="col-start-1 row-start-1 appearance-none w-4 h-4 rounded border border-[#b4b8bd] checked:bg-[#0d82ab] checked:border-[#0d82ab]" />
                      <svg class="col-start-1 row-start-1 w-4 h-4 pointer-events-none" viewBox="0 0 16 16" fill="none" stroke="currentColor" stroke-width="1.800">
                        <path d="M4 8l3 3 5-5.500" />
                      </svg>
                    </div>
                  </td>
                </tr>
              </tbody>
            </table>
          </div>

          <!-- Side tools -->
          <div class="flex flex-col items-center gap-5 w-6 pt-[9px] border-r border-[#e6e8ea] bg-[#dee1e5] text-[#5f6368]">
            <button type="button" aria-label="الأعمدة">
              <svg class="w-[18px] h-[18px]" viewBox="0 0 18 18" fill="none" stroke="currentColor" stroke-width="1.600">
                <rect x="2.500" y="2.500" width="13" height="13" rx="1.500" />
                <path d="M2.500 7h13M7 2.500v13" />
              </svg>
            </button>
            <button type="button" aria-label="تصفية">
              <svg class="w-[18px] h-[18px] p-px"><use href="#i-filter" /></svg>
            </button>
            <button type="button" aria-label="القائمة">
              <svg class="w-[18px] h-[18px]" viewBox="0 0 18 18" stroke="currentColor" stroke-width="2">
                <path d="M3 5h12M3 9h12M3 13h12" />
              </svg>
            </button>
          </div>
        </div>
      </div>
    </main>
  </body>
</html>
